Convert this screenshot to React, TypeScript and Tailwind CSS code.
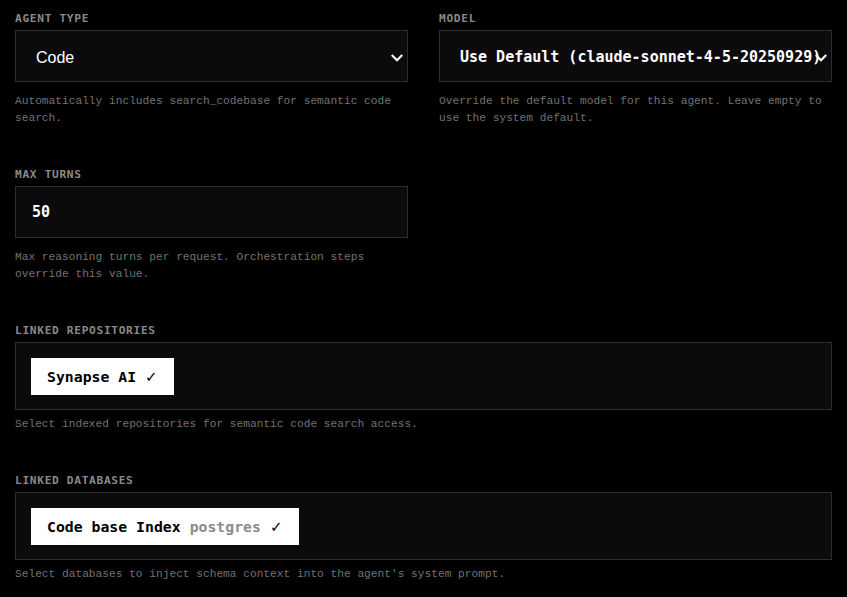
import React from "react";

const mono = "font-['Liberation_Mono','DejaVu_Sans_Mono',monospace]";
const sansMono = "font-['DejaVu_Sans_Mono','Liberation_Mono',monospace]";

const Label = ({ children }: { children: React.ReactNode }) => (
  <div className={`${sansMono} mb-[3.5px] h-[17px] text-[11.2px] font-bold uppercase leading-[17px] tracking-[0.06em] text-[#8a8a8a]`}>
    {children}
  </div>
);

const Help = ({ children, className = "" }: { children: React.ReactNode; className?: string }) => (
  <p className={`${mono} text-[11.2px] leading-[16.8px] text-[#727272] ${className}`}>{children}</p>
);

const Chevron = () => (
  <svg className="absolute right-[4px] top-[23px] h-[8px] w-[12px]" viewBox="0 0 12 8" fill="none">
    <path d="M1.5 1.8 6 6.2l4.5-4.4" stroke="white" strokeWidth={2.2} strokeLinecap="square" />
  </svg>
);

const Chip = ({ name, sub }: { name: string; sub?: string }) => (
  <span className={`${sansMono} inline-flex h-[37px] items-center bg-white px-4 pt-[1px] text-[14.8px] font-bold text-black`}>
    {name}
    {sub && <span className="ml-[9px] text-[#8c8c8c]">{sub}</span>}
    <span className="ml-[9px] font-['DejaVu_Sans',sans-serif] text-[15px] font-bold">✓</span>
  </span>
);

export default function App() {
  return (
    <div className="min-h-screen w-full overflow-hidden bg-black px-[15px] pt-[9.5px]">
      <div className="flex flex-col gap-[39px]">
        {/* Agent type + model */}
        <div className="grid grid-cols-2 gap-x-[31px]">
          <div>
            <Label>Agent Type</Label>
            <div className="relative flex h-[52px] items-center border border-[#2d2d2d] bg-[#0b0b0d] pl-[20px] pt-[3px]">
              <span className="font-['Liberation_Sans',Arial,sans-serif] text-[16px] text-white">Code</span>
              <Chevron />
            </div>
            <Help className="mt-[11px]">
              Automatically includes search_codebase for semantic code search.
            </Help>
          </div>
          <div>
            <Label>Model</Label>
            <div className="relative flex h-[52px] items-center overflow-hidden border border-[#2d2d2d] bg-[#0b0b0d] pl-[20px] pt-[2px]">
              <span className={`${sansMono} whitespace-nowrap text-[15px] font-bold text-white`}>
                Use Default (claude-sonnet-4-5-20250929)
              </span>
              <Chevron />
            </div>
            <Help className="mt-[11px]">
              Override the default model for this agent. Leave empty to use the system default.
            </Help>
          </div>
        </div>

        {/* Max turns */}
        <div className="grid grid-cols-2 gap-x-[31px]">
          <div>
            <Label>Max Turns</Label>
            <div className="flex h-[52px] items-center border border-[#2d2d2d] bg-[#0b0b0d] pl-[16px]">
              <span className={`${sansMono} text-[15px] font-bold text-white`}>50</span>
            </div>
            <Help className="mt-[11px]">
              Max reasoning turns per request. Orchestration steps override this value.
            </Help>
          </div>
        </div>

        {/* Linked repositories */}
        <div>
          <Label>Linked Repositories</Label>
          <div className="flex flex-wrap gap-2 border border-[#2d2d2d] bg-[#0b0b0d] px-[15px] pb-[14px] pt-[15px]">
            <Chip name="Synapse AI" />
          </div>
          <Help className="mt-[6px]">Select indexed repositories for semantic code search access.</Help>
        </div>

        {/* Linked databases */}
        <div>
          <Label>Linked Databases</Label>
          <div className="flex flex-wrap gap-2 border border-[#2d2d2d] bg-[#0b0b0d] px-[15px] pb-[14px] pt-[15px]">
            <Chip name="Code base Index" sub="postgres" />
          </div>
          <Help className="mt-[6px]">
            Select databases to inject schema context into the agent's system prompt.
          </Help>
        </div>
      </div>
    </div>
  );
}
